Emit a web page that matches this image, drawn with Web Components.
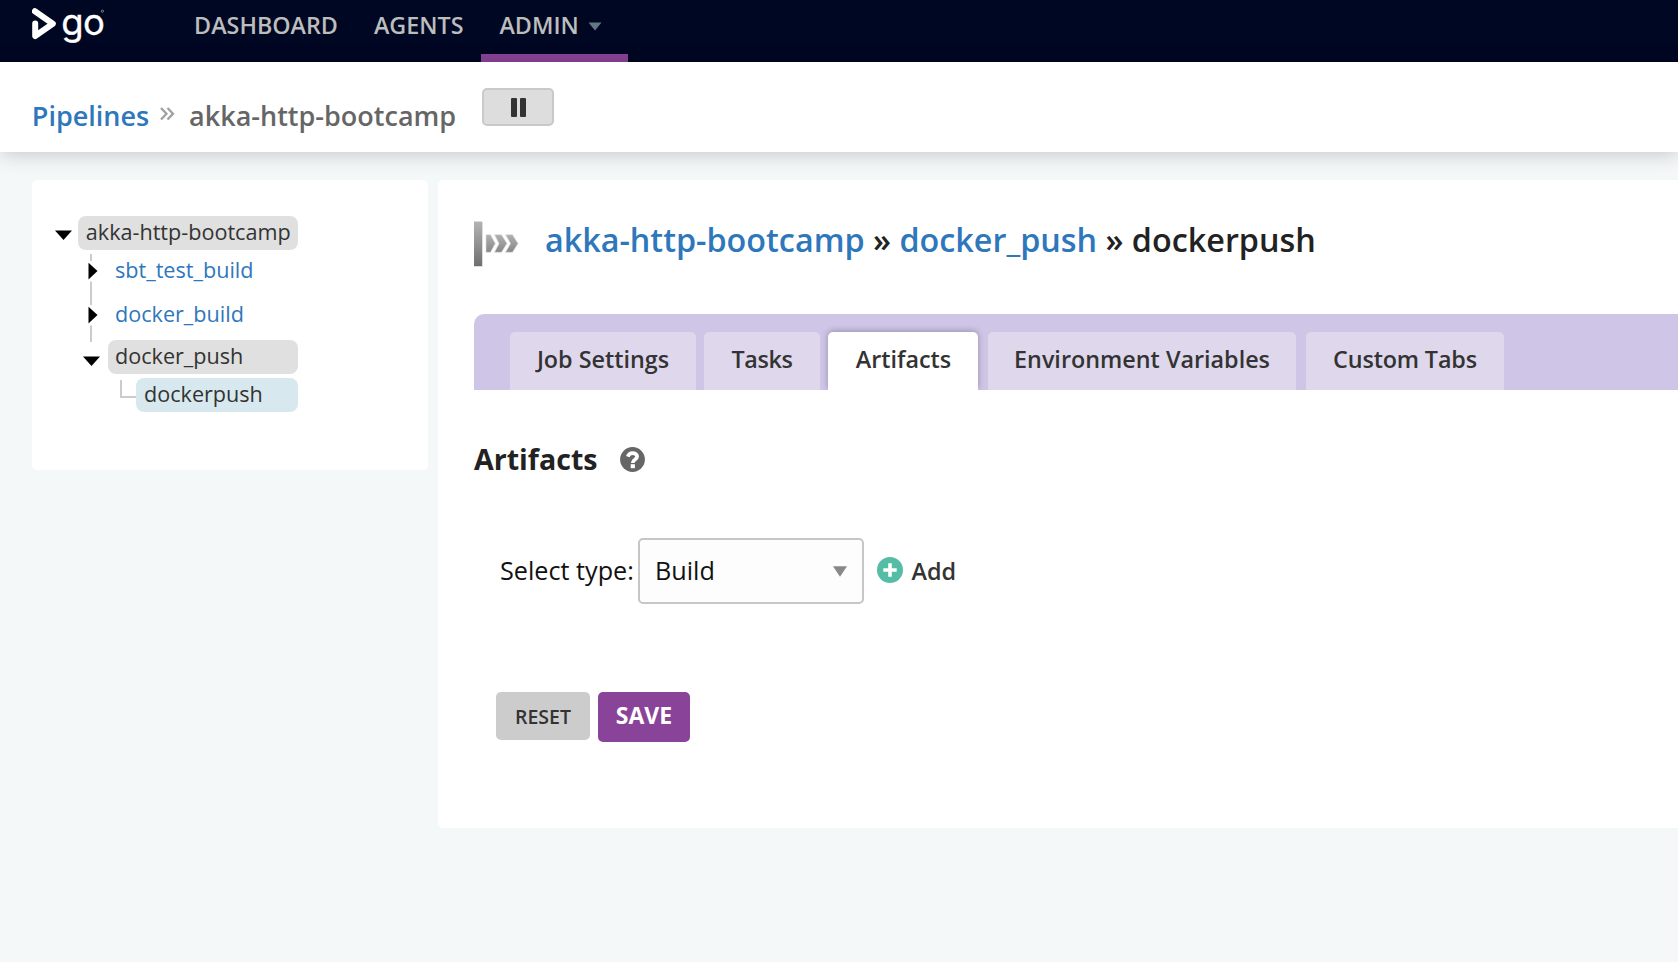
<!DOCTYPE html>
<html lang="en">
<head>
<meta charset="utf-8">
<title>Pipelines - akka-http-bootcamp</title>
<style>
  html, body { margin: 0; height: 100%; }
  body { font-family: "Open Sans", "Noto Sans", sans-serif; font-weight: 600; color: #333; background: #f4f8f9; overflow: hidden; white-space: nowrap; --link: #2f77bb; --purple: #894398; }
</style>
</head>
<body>
<go-app></go-app>
<script>
const define = (name, html) => {
  const template = document.createElement('template');
  template.innerHTML = html;
  customElements.define(name, class extends HTMLElement {
    connectedCallback() {
      if (this.shadowRoot) return;
      this.attachShadow({ mode: 'open' }).append(template.content.cloneNode(true));
    }
  });
};

define('go-logo', `
  <style>:host{display:block;width:76px;height:46px} svg{display:block} text{font-family:Inter,sans-serif;font-weight:400;fill:#fff;stroke:#fff;stroke-width:.3}</style>
  <svg width="76" height="46" viewBox="0 0 76 46">
    <path d="M2.9 11.2 L20.8 23.8 L3.2 36 V23.5" fill="none" stroke="#fff" stroke-width="6" stroke-linecap="round" stroke-linejoin="round"/>
    <text x="29.3" y="35.4" font-size="36.5" textLength="43.5" lengthAdjust="spacing">go</text>
    <circle cx="70.4" cy="11.2" r="1.1" fill="none" stroke="#99a" stroke-width=".8"/>
  </svg>`);

define('nav-item', `
  <style>
    :host{display:flex;align-items:center;box-sizing:border-box;height:62px;padding:0 18px;border-bottom:8px solid transparent;font-size:23.3px;line-height:50px;color:#bcbdbd}
    :host span{height:50px;margin-top:-4px}
    :host([active]){border-color:var(--purple)}
    svg{display:none;margin:-2px 8.5px 0 9px}
    :host([menu]) svg{display:block}
  </style>
  <span><slot></slot></span><svg width="14" height="9" viewBox="0 0 14 9"><path d="M0.5 .5H13.5L7 8.5Z" fill="#647883"/></svg>`);

define('go-header', `
  <style>:host{display:flex;height:62px;background:#000722} go-logo{margin:0 67.8px 0 32.3px}</style>
  <go-logo></go-logo><nav-item>DASHBOARD</nav-item><nav-item>AGENTS</nav-item><nav-item active menu>ADMIN</nav-item>`);

define('pause-button', `
  <style>:host{display:flex;box-sizing:border-box;width:72px;height:38px;border:2px solid #c9c9c9;border-radius:5px;background:#ddd;align-items:center;justify-content:center;gap:3px} i{width:6px;height:19px;margin-top:1px;border-radius:1px;background:#333}</style>
  <i></i><i></i>`);

define('crumb-bar', `
  <style>
    :host{display:flex;position:relative;z-index:1;box-sizing:border-box;height:90px;padding:26px 0 0 31.8px;background:#fff;box-shadow:0 2px 20px rgba(0,0,0,.2);font-size:27px;line-height:55px;color:#666}
    a{color:var(--link)} svg{margin:19px 14.3px 0 10.6px} pause-button{margin-left:26px}
  </style>
  <a>Pipelines</a>
  <svg width="15" height="14" viewBox="0 0 15 14"><path d="M1 1L6.5 6.7L1 12.5M7.5 1L13 6.7L7.5 12.5" fill="none" stroke="#a0a0a0" stroke-width="2.3"/></svg>
  <span>akka-http-bootcamp</span><pause-button></pause-button>`);

define('tree-row', `
  <style>
    :host{display:flex;height:34px;font-size:21.6px;line-height:31px;font-weight:400}
    div{flex:1;box-sizing:border-box;height:34px;padding-left:var(--pad,7px);border-radius:8px;background:var(--fill,transparent);color:var(--ink,var(--link))}
    ::slotted(svg){display:block;flex:none;overflow:visible}
  </style>
  <slot name="toggle"></slot><div><slot></slot></div>`);

define('pipeline-tree', `
  <style>
    :host{display:block;box-sizing:border-box;width:396px;height:290px;padding:36px 130px 0 0;background:#fff;border-radius:5px}
    .gray{--fill:#e0e0e0;--ink:#333} .blue{--fill:#d7e9ef;--ink:#333;--pad:8px}
    .root{--pad:7.8px}
  </style>
  <tree-row class="gray root"><svg slot="toggle" width="46" height="34"><path d="M23 14.5H40L31.5 24Z"/></svg>akka-http-bootcamp</tree-row>
  <tree-row style="margin-top:4px"><svg slot="toggle" width="76" height="34"><path d="M59 0V7M59 27.5V51" stroke="#ccc" stroke-width="2"/><path d="M56.5 8.8V25.5L65.5 17Z"/></svg>sbt_test_build</tree-row>
  <tree-row style="margin-top:10px"><svg slot="toggle" width="76" height="34"><path d="M59 27.5V44" stroke="#ccc" stroke-width="2"/><path d="M56.5 8.8V25.5L65.5 17Z"/></svg>docker_build</tree-row>
  <tree-row class="gray" style="margin-top:8px"><svg slot="toggle" width="76" height="34"><path d="M51 16.5H68L59.5 26Z"/></svg>docker_push</tree-row>
  <tree-row class="blue" style="margin-top:4px"><svg slot="toggle" width="104" height="34"><path d="M89 2V19H104" fill="none" stroke="#ccc" stroke-width="2"/></svg>dockerpush</tree-row>`);

define('job-title', `
  <style>
    :host{display:flex;font-size:32.35px;line-height:50px;height:50px;color:#222}
    a{color:var(--link)} svg{margin:7px 21.9px 0 0}
  </style>
  <svg width="49" height="48" viewBox="0 0 49 48">
    <defs><linearGradient id="bar" x2="0" y2="1"><stop stop-color="#b4b4b4"/><stop offset="1" stop-color="#6f6f6f"/></linearGradient>
    <linearGradient id="arrows" gradientUnits="userSpaceOnUse" x1="0" y1="14" x2="0" y2="32"><stop stop-color="#b0b0b0"/><stop offset="1" stop-color="#858585"/></linearGradient></defs>
    <path d="M0 45.5H8.5V1" fill="none" stroke="#ddd"/><path d="M0 .5H8V45H0Z" fill="url(#bar)"/>
    <path d="M12 13.7H16.5L21.3 22.5L16.5 31.3H12ZM20.5 13.7H27.5L33 22.5L27.5 31.3H20.5L25 22.5ZM31.5 13.7H38.5L44 22.5L38.5 31.3H31.5L36.5 22.5Z" fill="url(#arrows)" stroke="#ddd" stroke-width=".7"/>
  </svg>
  <div><a>akka-http-bootcamp</a> » <a>docker_push</a> » dockerpush</div>`);

define('tab-item', `
  <style>
    :host{display:block;box-sizing:border-box;height:58px;text-align:center;border-radius:5px 5px 0 0;background:#dfd8ed;font-size:23.35px;line-height:55px;color:#333}
    :host([active]){background:#fff;box-shadow:0 -1px 6px rgba(0,0,0,.28)}
  </style><slot></slot>`);

define('tab-bar', `
  <style>
    :host{display:flex;box-sizing:border-box;height:76px;padding:18px 0 0 36px;border-radius:10px 0 0 0;background:#cfc5e7;overflow:hidden}
  </style>
  <tab-item style="width:186px">Job Settings</tab-item>
  <tab-item style="width:116px;margin-left:8px;letter-spacing:-.4px">Tasks</tab-item>
  <tab-item active style="width:150px;margin-left:8px;text-indent:1px">Artifacts</tab-item>
  <tab-item style="width:308px;margin-left:10px">Environment Variables</tab-item>
  <tab-item style="width:198px;margin-left:10px;letter-spacing:-.15px">Custom Tabs</tab-item>`);

define('type-select', `
  <style>
    :host{display:flex;align-items:center;justify-content:space-between;box-sizing:border-box;width:226px;height:66px;padding:0 15px;border:2px solid #c6c6c6;border-radius:5px;background:#fdfdfd;color:#111}
    span{margin-top:-2px}
  </style><span><slot></slot></span><svg width="14" height="11" viewBox="0 0 14 11"><path d="M0 .3H14L7 10.7Z" fill="#888"/></svg>`);

define('form-button', `
  <style>
    :host{display:block;box-sizing:border-box;width:94px;height:48px;border-radius:5px;background:#ccc;text-align:center;font-size:19.5px;line-height:49px}
    :host([primary]){width:92px;height:50px;background:var(--purple);color:#fff;font-size:23px;font-weight:700;line-height:46px}
  </style><slot></slot>`);

define('artifacts-form', `
  <style>
    :host{display:block}
    h3{display:flex;align-items:center;margin:44px 0 0;height:50px;font-size:28.6px;font-weight:700;line-height:50px;color:#222}
    h3 svg{margin:1px 0 0 22.5px}
    .pick{display:flex;align-items:center;height:66px;margin:54px 0 0 26px;font-size:25.2px;font-weight:400;color:#111}
    .label{margin-top:-2px;width:133.4px}
    .pick type-select{margin-left:4.6px}
    .pick svg{margin:-3px 8px 0 13.5px}
    .add{font-size:23.4px;font-weight:600;color:#333}
    .actions{display:flex;gap:8px;margin:88px 0 0 22px}
  </style>
  <h3>Artifacts<svg width="25" height="25" viewBox="0 0 25 25"><circle cx="12.5" cy="12.5" r="12.4" fill="#666"/><path d="M7.8 9.6C8.6 7.2 10.2 6.1 12.6 6.1C15.1 6.1 17.1 7.5 17.1 9.6C17.1 12.6 12.7 12.3 12.7 16" fill="none" stroke="#fff" stroke-width="3.7"/><path d="M10.7 17.2H14.9V21.2H10.7Z" fill="#fff"/></svg></h3>
  <div class="pick"><span class="label">Select type:</span><type-select>Build</type-select>
    <svg width="26" height="26" viewBox="0 0 26 26"><circle cx="13" cy="13" r="13" fill="#55bca5"/><path d="M13 6.3V19.7M6.3 13H19.7" stroke="#fff" stroke-width="3.6"/></svg><span class="add">Add</span></div>
  <div class="actions"><form-button>RESET</form-button><form-button primary>SAVE</form-button></div>`);

define('job-panel', `
  <style>
    :host{display:block;box-sizing:border-box;flex:1;height:648px;padding:34px 0 0 36px;background:#fff;border-radius:5px 0 0 5px}
    tab-bar{margin-top:50px}
  </style>
  <job-title></job-title><tab-bar></tab-bar><artifacts-form></artifacts-form>`);

define('go-app', `
  <style>:host{display:block} main{display:flex;align-items:flex-start;gap:10px;padding:28px 0 0 32px}</style>
  <go-header></go-header><crumb-bar></crumb-bar><main><pipeline-tree></pipeline-tree><job-panel></job-panel></main>`);
</script>
</body>
</html>
